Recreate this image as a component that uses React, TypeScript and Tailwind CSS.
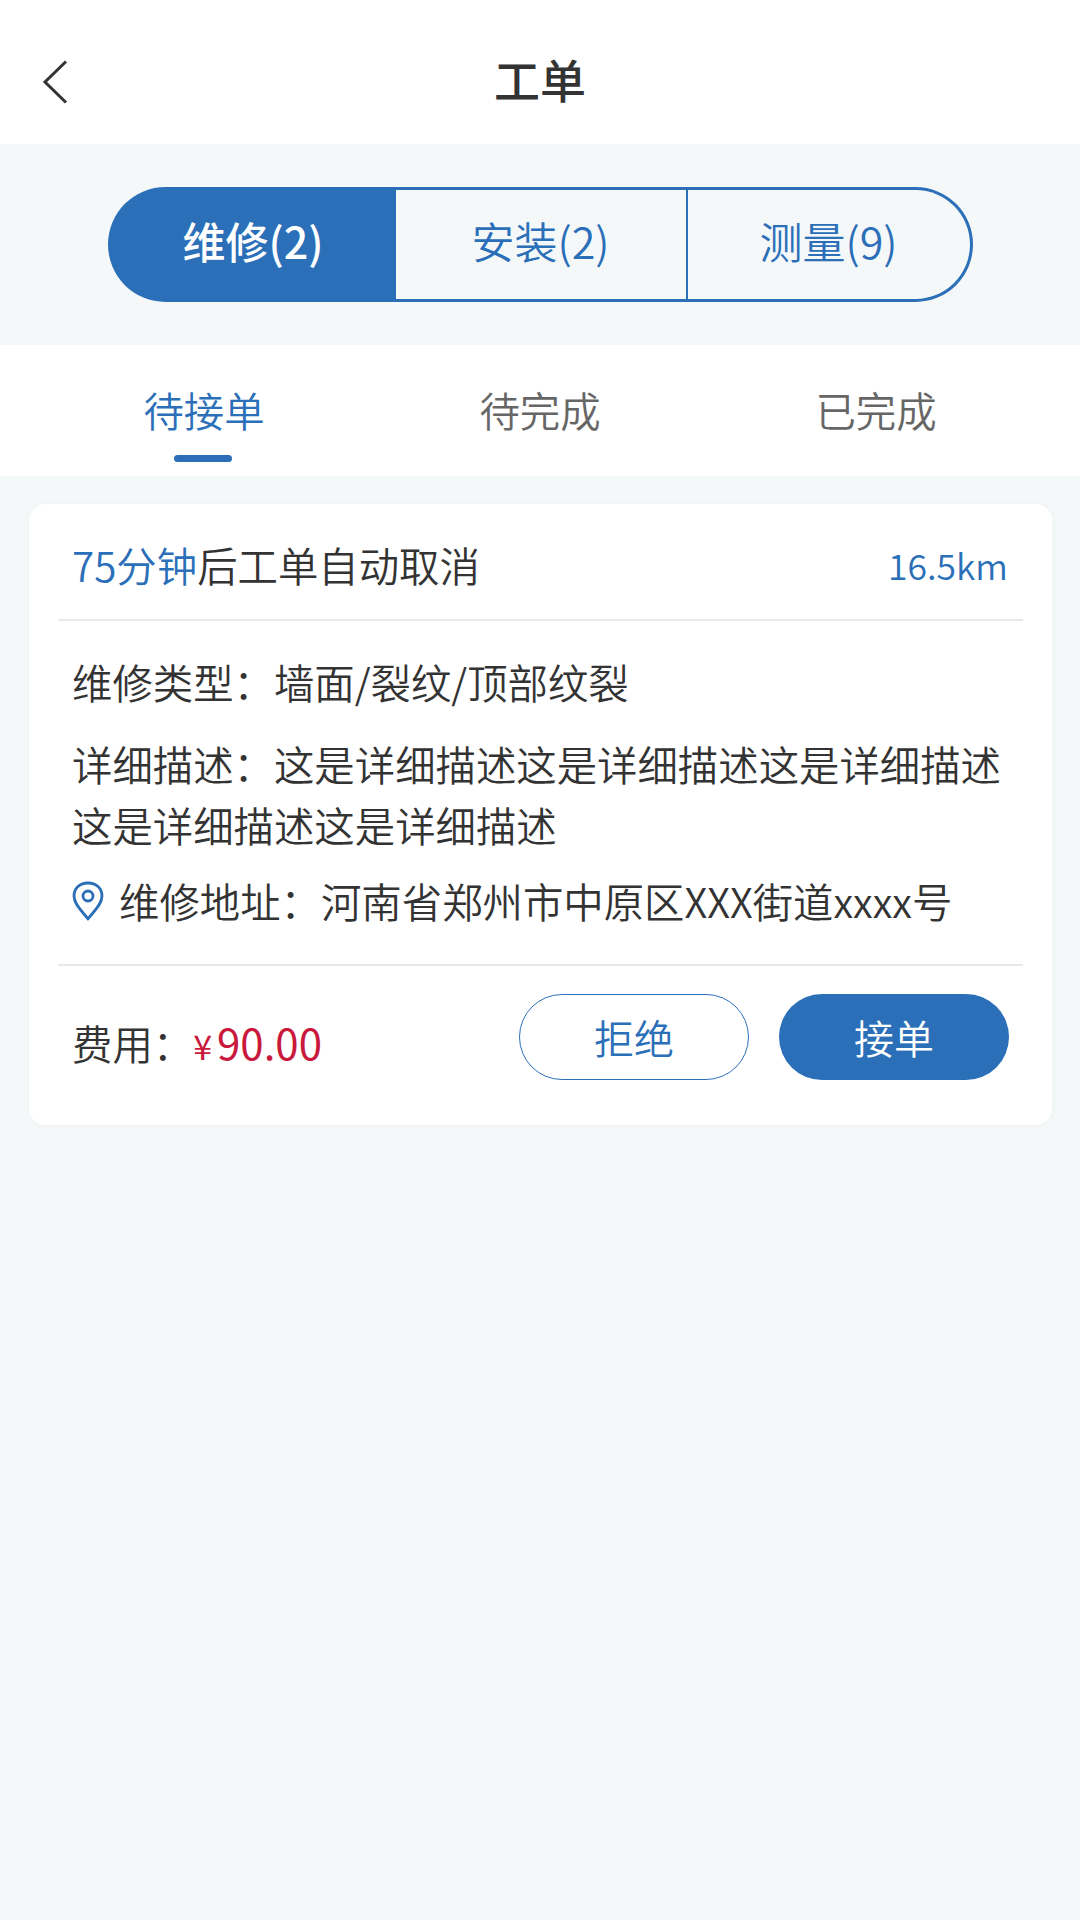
import { useState } from 'react';

const FONT = "font-['Noto_Sans_CJK_SC','Noto_Sans',sans-serif]";

const SEGMENTS = [
  { label: '维修(2)', width: 'w-[285px]' },
  { label: '安装(2)', width: 'w-[290px]' },
  { label: '测量(9)', width: 'flex-1 border-l-2 border-[#2b6fb9]' },
];
const TABS = ['待接单', '待完成', '已完成'];

function BackIcon() {
  return (
    <svg width="26" height="44" viewBox="0 0 26 44" fill="none" className="text-[#333333]">
      <path d="M24 1.5 L3 22 L24 42.5" stroke="currentColor" strokeWidth="3" />
    </svg>
  );
}

function PinIcon() {
  return (
    <svg width="32" height="40" viewBox="0 0 32 40" fill="none" className="shrink-0 text-[#2b6fb9]">
      <path
        d="M16 38 C11 31 2 24 2 15 C2 7 8 2 16 2 C24 2 30 7 30 15 C30 24 21 31 16 38 Z"
        stroke="currentColor"
        strokeWidth="2.8"
        strokeLinejoin="round"
      />
      <circle cx="16" cy="15" r="5" stroke="currentColor" strokeWidth="2.8" />
    </svg>
  );
}

export default function App() {
  const [segment, setSegment] = useState(0);
  const [tab, setTab] = useState(0);

  return (
    <div className={`${FONT} flex min-h-[1920px] w-[1080px] flex-col bg-[#f5f8f9] font-[350] text-[#333333]`}>
      {/* Title bar */}
      <header className="relative flex h-[144px] items-center justify-center bg-white pt-[12px]">
        <button type="button" className="absolute left-[42px] top-[60px]">
          <BackIcon />
        </button>
        <h1 className="text-[46px] font-medium leading-none">工单</h1>
      </header>

      {/* Work order type switch */}
      <section className="flex h-[201px] items-center justify-center">
        <div className="h-[115px] w-[865px] rounded-full bg-[#2b6fb9] p-[3px]">
          <div className="flex h-full w-full overflow-hidden rounded-full">
            {SEGMENTS.map((item, index) => (
              <button
                key={item.label}
                type="button"
                onClick={() => setSegment(index)}
                className={`flex h-full items-center justify-center pb-[8px] text-[43px] leading-none ${item.width} ${
                  segment === index ? 'font-medium text-white' : 'bg-[#f5f8f9] text-[#2b6fb9]'
                }`}
              >
                {item.label}
              </button>
            ))}
          </div>
        </div>
      </section>

      {/* Status tabs */}
      <nav className="grid h-[131px] grid-cols-3 bg-white px-[36px]">
        {TABS.map((label, index) => (
          <button
            key={label}
            type="button"
            onClick={() => setTab(index)}
            className={`relative text-center text-[40.4px] leading-none ${
              tab === index ? 'text-[#2b6fb9]' : 'text-[#666666]'
            }`}
          >
            {label}
            {tab === index && (
              <span className="absolute bottom-[14px] left-[calc(50%-30px)] h-[7px] w-[58px] rounded-full bg-[#2b6fb9]" />
            )}
          </button>
        ))}
      </nav>

      {/* Order card */}
      <article className="ml-[29px] mr-[28px] mt-[28px] rounded-[16px] bg-white px-[29px] shadow-[0_0_6px_rgba(0,0,0,0.03)]">
        <div className="flex h-[117px] items-center justify-between border-b-2 border-[#e8e8e8] pl-[14px] pr-[15px] pt-[8px]">
          <p className="text-[40.4px] leading-none">
            <span className="text-[#2b6fb9]">75分钟</span>后工单自动取消
          </p>
          <span className="mb-[2px] text-[35.5px] leading-none text-[#2b6fb9]">16.5km</span>
        </div>

        <div className="flex flex-col border-b-2 border-[#e8e8e8] pb-[33px] pl-[14px] pr-[4px] pt-[30px] text-[40.4px] leading-[61px]">
          <p>维修类型：墙面/裂纹/顶部纹裂</p>
          <p className="mt-[21px]">详细描述：这是详细描述这是详细描述这是详细描述这是详细描述这是详细描述</p>
          <div className="mt-[15px] flex items-center gap-[15px]">
            <PinIcon />
            <p>维修地址：河南省郑州市中原区XXX街道xxxx号</p>
          </div>
        </div>

        <div className="flex items-center justify-between pb-[45px] pl-[14px] pr-[14px] pt-[28px]">
          <p className="mt-[11px] text-[40.4px] leading-none">
            费用：
            <span className="font-normal text-[#c8193c]">
              <span className="text-[34px]">¥</span>
              <span className="ml-[5px] text-[42px]">90.00</span>
            </span>
          </p>
          <div className="flex gap-[30px]">
            <button
              type="button"
              className="h-[86px] w-[230px] rounded-full border-[1.5px] border-[#2b6fb9] text-[40px] leading-none text-[#2b6fb9]"
            >
              拒绝
            </button>
            <button type="button" className="h-[86px] w-[230px] rounded-full bg-[#2b6fb9] text-[40px] leading-none text-white">
              接单
            </button>
          </div>
        </div>
      </article>
    </div>
  );
}
